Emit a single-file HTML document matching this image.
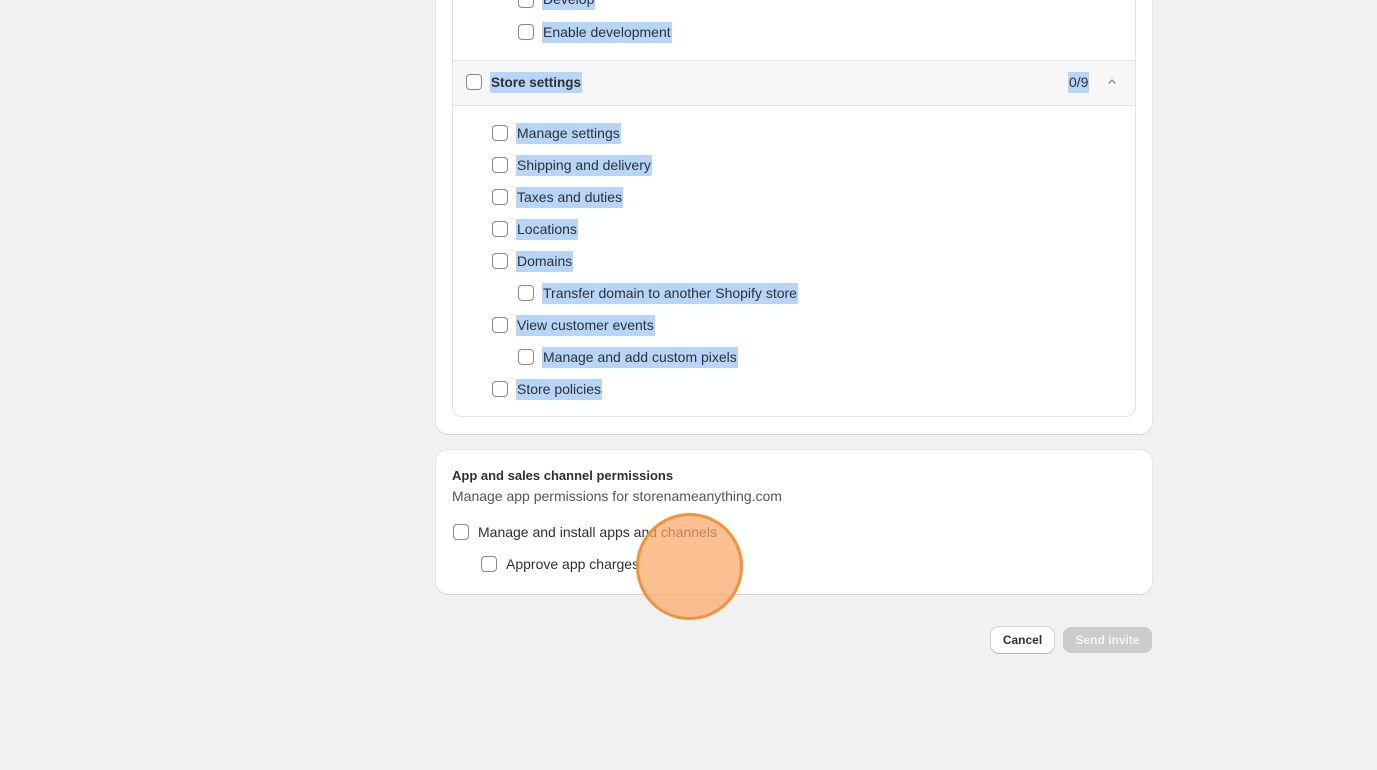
<!DOCTYPE html>
<html><head><style>
body{margin:0;width:1377px;height:770px;background:#f1f1f1;font-family:"Liberation Sans",sans-serif;font-size:14px;color:#303030;position:relative;overflow:hidden}
.a{position:absolute}
.card{position:absolute;left:436px;width:716px;background:#fff;border-radius:12px;box-shadow:0 1px 0 #d4d4d4,0 0 0 1px #e6e6e6}
.cb{position:absolute;width:14px;height:14px;border:1px solid #8a8a8a;border-radius:4px;background:#fff}
.hl{position:absolute;background:#b7d5f8;color:#303030;line-height:21px;height:21px;padding:0 1px}
.t{position:absolute;line-height:20px}
.btn{position:absolute;height:26px;line-height:26px;border-radius:8px;font-size:12px;font-weight:bold;text-align:center}
</style></head><body>
<div class="card" style="top:-20px;height:454px"></div>
<div class="a" style="left:452px;top:-20px;width:682px;height:436px;border:1px solid #e3e3e3;border-top:none;border-radius:0 0 10px 10px;background:#fff"></div>
<div class="a" style="left:453px;top:60px;width:682px;height:44px;background:#f7f7f7;border-top:1px solid #e3e3e3;border-bottom:1px solid #e3e3e3"></div>

<div class="cb" style="left:518px;top:-8px"></div><div class="hl" style="left:542px;top:-11px">Develop</div>
<div class="cb" style="left:518px;top:24px"></div><div class="hl" style="left:542px;top:22px">Enable development</div>

<div class="cb" style="left:466px;top:74px"></div><div class="hl" style="left:490px;top:72px;font-weight:bold;font-size:13.5px">Store settings</div>
<div class="hl" style="left:1068px;top:72px">0/9</div>
<svg class="a" style="left:1106px;top:77px" width="12" height="10"><path d="M2.5 6.5 L6 3 L9.5 6.5" fill="none" stroke="#8a8a8a" stroke-width="1.3"/></svg>

<div class="cb" style="left:492px;top:125px"></div><div class="hl" style="left:516px;top:123px">Manage settings</div>
<div class="cb" style="left:492px;top:157px"></div><div class="hl" style="left:516px;top:155px">Shipping and delivery</div>
<div class="cb" style="left:492px;top:189px"></div><div class="hl" style="left:516px;top:187px">Taxes and duties</div>
<div class="cb" style="left:492px;top:221px"></div><div class="hl" style="left:516px;top:219px">Locations</div>
<div class="cb" style="left:492px;top:253px"></div><div class="hl" style="left:516px;top:251px">Domains</div>
<div class="cb" style="left:518px;top:285px"></div><div class="hl" style="left:542px;top:283px">Transfer domain to another Shopify store</div>
<div class="cb" style="left:492px;top:317px"></div><div class="hl" style="left:516px;top:315px">View customer events</div>
<div class="cb" style="left:518px;top:349px"></div><div class="hl" style="left:542px;top:347px">Manage and add custom pixels</div>
<div class="cb" style="left:492px;top:381px"></div><div class="hl" style="left:516px;top:379px">Store policies</div>

<div class="card" style="top:450px;height:144px"></div>
<div class="t" style="left:452px;top:466px;font-weight:bold;font-size:13px">App and sales channel permissions</div>
<div class="t" style="left:452px;top:486px;color:#555">Manage app permissions for storenameanything.com</div>
<div class="cb" style="left:453px;top:524px"></div><div class="t" style="left:478px;top:522px">Manage and install apps and channels</div>
<div class="cb" style="left:481px;top:556px"></div><div class="t" style="left:506px;top:554px">Approve app charges</div>

<div class="a" style="left:636px;top:513px;width:101px;height:101px;border-radius:50%;background:rgba(252,165,100,0.7);border:3px solid #f5913a"></div>

<div class="btn" style="left:991px;top:627px;width:63px;background:#fff;box-shadow:0 1px 0 #b5b5b5,0 0 0 1px #d4d4d4;color:#303030">Cancel</div>
<div class="btn" style="left:1063px;top:627px;width:89px;background:#cccccc;color:#f4f4f4">Send invite</div>
</body></html>
